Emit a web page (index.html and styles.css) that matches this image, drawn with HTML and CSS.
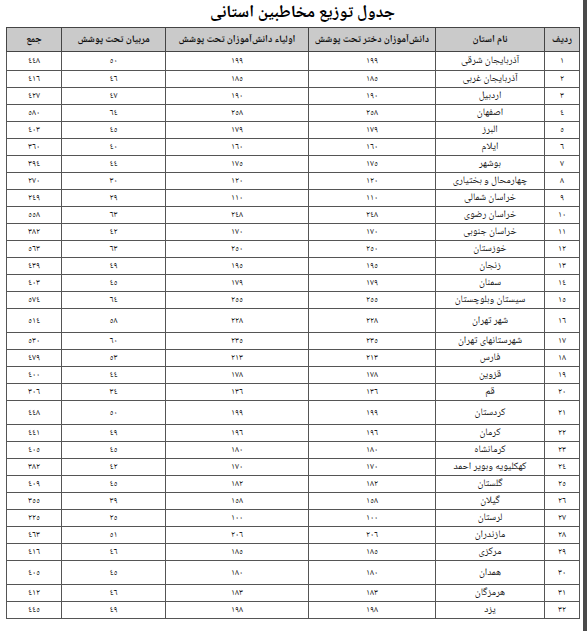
FILE: index.html
```html
<!DOCTYPE html>
<html lang="fa" dir="rtl">
<head>
<meta charset="utf-8">
<title>جدول توزیع مخاطبین استانی</title>
<link rel="stylesheet" href="styles.css">
</head>
<body>
<div class="page">
  <h1 class="title">جدول توزیع مخاطبین استانی</h1>
  <table class="grid">
    <colgroup>
      <col class="c-idx"><col class="c-name"><col class="c-girls"><col class="c-parents"><col class="c-coach"><col class="c-sum">
    </colgroup>
    <thead>
      <tr>
        <th>ردیف</th>
        <th>نام استان</th>
        <th>دانش‌آموزان دختر تحت پوشش</th>
        <th>اولیاء دانش‌آموزان تحت پوشش</th>
        <th>مربیان تحت پوشش</th>
        <th>جمع</th>
      </tr>
    </thead>
    <tbody>
      <tr class="first"><td>١</td><td class="name">آذربایجان شرقی</td><td>١٩٩</td><td>١٩٩</td><td>٥٠</td><td>٤٤٨</td></tr>
      <tr><td>٢</td><td class="name">آذربایجان غربی</td><td>١٨٥</td><td>١٨٥</td><td>٤٦</td><td>٤١٦</td></tr>
      <tr><td>٣</td><td class="name">اردبیل</td><td>١٩٠</td><td>١٩٠</td><td>٤٧</td><td>٤٢٧</td></tr>
      <tr><td>٤</td><td class="name">اصفهان</td><td>٢٥٨</td><td>٢٥٨</td><td>٦٤</td><td>٥٨٠</td></tr>
      <tr><td>٥</td><td class="name">البرز</td><td>١٧٩</td><td>١٧٩</td><td>٤٥</td><td>٤٠٣</td></tr>
      <tr><td>٦</td><td class="name">ایلام</td><td>١٦٠</td><td>١٦٠</td><td>٤٠</td><td>٣٦٠</td></tr>
      <tr><td>٧</td><td class="name">بوشهر</td><td>١٧٥</td><td>١٧٥</td><td>٤٤</td><td>٣٩٤</td></tr>
      <tr><td>٨</td><td class="name">چهارمحال و بختیاری</td><td>١٢٠</td><td>١٢٠</td><td>٣٠</td><td>٢٧٠</td></tr>
      <tr><td>٩</td><td class="name">خراسان شمالی</td><td>١١٠</td><td>١١٠</td><td>٢٩</td><td>٢٤٩</td></tr>
      <tr><td>١٠</td><td class="name">خراسان رضوی</td><td>٢٤٨</td><td>٢٤٨</td><td>٦٣</td><td>٥٥٨</td></tr>
      <tr><td>١١</td><td class="name">خراسان جنوبی</td><td>١٧٠</td><td>١٧٠</td><td>٤٢</td><td>٣٨٢</td></tr>
      <tr><td>١٢</td><td class="name">خوزستان</td><td>٢٥٠</td><td>٢٥٠</td><td>٦٣</td><td>٥٦٣</td></tr>
      <tr><td>١٣</td><td class="name">زنجان</td><td>١٩٥</td><td>١٩٥</td><td>٤٩</td><td>٤٣٩</td></tr>
      <tr><td>١٤</td><td class="name">سمنان</td><td>١٧٩</td><td>١٧٩</td><td>٤٥</td><td>٤٠٣</td></tr>
      <tr><td>١٥</td><td class="name">سیستان وبلوچستان</td><td>٢٥٥</td><td>٢٥٥</td><td>٦٤</td><td>٥٧٤</td></tr>
      <tr class="tall"><td>١٦</td><td class="name">شهر تهران</td><td>٢٢٨</td><td>٢٢٨</td><td>٥٨</td><td>٥١٤</td></tr>
      <tr><td>١٧</td><td class="name">شهرستانهای تهران</td><td>٢٣٥</td><td>٢٣٥</td><td>٦٠</td><td>٥٣٠</td></tr>
      <tr><td>١٨</td><td class="name">فارس</td><td>٢١٣</td><td>٢١٣</td><td>٥٣</td><td>٤٧٩</td></tr>
      <tr><td>١٩</td><td class="name">قزوین</td><td>١٧٨</td><td>١٧٨</td><td>٤٤</td><td>٤٠٠</td></tr>
      <tr><td>٢٠</td><td class="name">قم</td><td>١٣٦</td><td>١٣٦</td><td>٣٤</td><td>٣٠٦</td></tr>
      <tr class="tall"><td>٢١</td><td class="name">کردستان</td><td>١٩٩</td><td>١٩٩</td><td>٥٠</td><td>٤٤٨</td></tr>
      <tr><td>٢٢</td><td class="name">کرمان</td><td>١٩٦</td><td>١٩٦</td><td>٤٩</td><td>٤٤١</td></tr>
      <tr><td>٢٣</td><td class="name">کرمانشاه</td><td>١٨٠</td><td>١٨٠</td><td>٤٥</td><td>٤٠٥</td></tr>
      <tr><td>٢٤</td><td class="name">کهکلیویه وبویر احمد</td><td>١٧٠</td><td>١٧٠</td><td>٤٢</td><td>٣٨٢</td></tr>
      <tr><td>٢٥</td><td class="name">گلستان</td><td>١٨٢</td><td>١٨٢</td><td>٤٥</td><td>٤٠٩</td></tr>
      <tr><td>٢٦</td><td class="name">گیلان</td><td>١٥٨</td><td>١٥٨</td><td>٣٩</td><td>٣٥٥</td></tr>
      <tr><td>٢٧</td><td class="name">لرستان</td><td>١٠٠</td><td>١٠٠</td><td>٢٥</td><td>٢٢٥</td></tr>
      <tr><td>٢٨</td><td class="name">مازندران</td><td>٢٠٦</td><td>٢٠٦</td><td>٥١</td><td>٤٦٣</td></tr>
      <tr><td>٢٩</td><td class="name">مرکزی</td><td>١٨٥</td><td>١٨٥</td><td>٤٦</td><td>٤١٦</td></tr>
      <tr class="tall"><td>٣٠</td><td class="name">همدان</td><td>١٨٠</td><td>١٨٠</td><td>٤٥</td><td>٤٠٥</td></tr>
      <tr><td>٣١</td><td class="name">هرمزگان</td><td>١٨٣</td><td>١٨٣</td><td>٤٦</td><td>٤١٢</td></tr>
      <tr><td>٣٢</td><td class="name">یزد</td><td>١٩٨</td><td>١٩٨</td><td>٤٩</td><td>٤٤٥</td></tr>
    </tbody>
  </table>
</div>
</body>
</html>
```

FILE: styles.css
```css
html, body {
  margin: 0;
  padding: 0;
  background: #ffffff;
}
body {
  width: 587px;
  height: 631px;
  overflow: hidden;
  font-family: "Noto Naskh Arabic", "Noto Sans Arabic", "DejaVu Sans", sans-serif;
  color: #111;
}
.page {
  width: 583px;
  height: 631px;
  box-sizing: border-box;
  border-right: 4px solid #4a4a4a;
  padding-right: 3px;
  padding-left: 7px;
}
.title {
  margin: 0;
  height: 27px;
  line-height: 27px;
  font-size: 17px;
  font-weight: bold;
  text-align: center;
  color: #000;
  padding-left: 14px;
}
.grid {
  width: 573px;
  border-collapse: collapse;
  table-layout: fixed;
  border: 1.5px solid #333;
}
.c-idx { width: 35px; }
.c-name { width: 109px; }
.c-girls { width: 127px; }
.c-parents { width: 143px; }
.c-coach { width: 104px; }
.c-sum { width: 55px; }
.grid th {
  height: 23px;
  padding: 0;
  background: #cacaca;
  border: 1px solid #444;
  font-size: 10px;
  font-weight: bold;
  text-align: center;
  white-space: nowrap;
}
.grid td {
  height: 16px;
  padding: 0;
  border: 1px solid #555;
  font-size: 9px;
  line-height: 14px;
  text-align: center;
  white-space: nowrap;
}
.grid td.name {
  font-size: 10px;
}
.grid tr.first td {
  height: 18px;
}
.grid tr.tall td {
  height: 23px;
}
```
